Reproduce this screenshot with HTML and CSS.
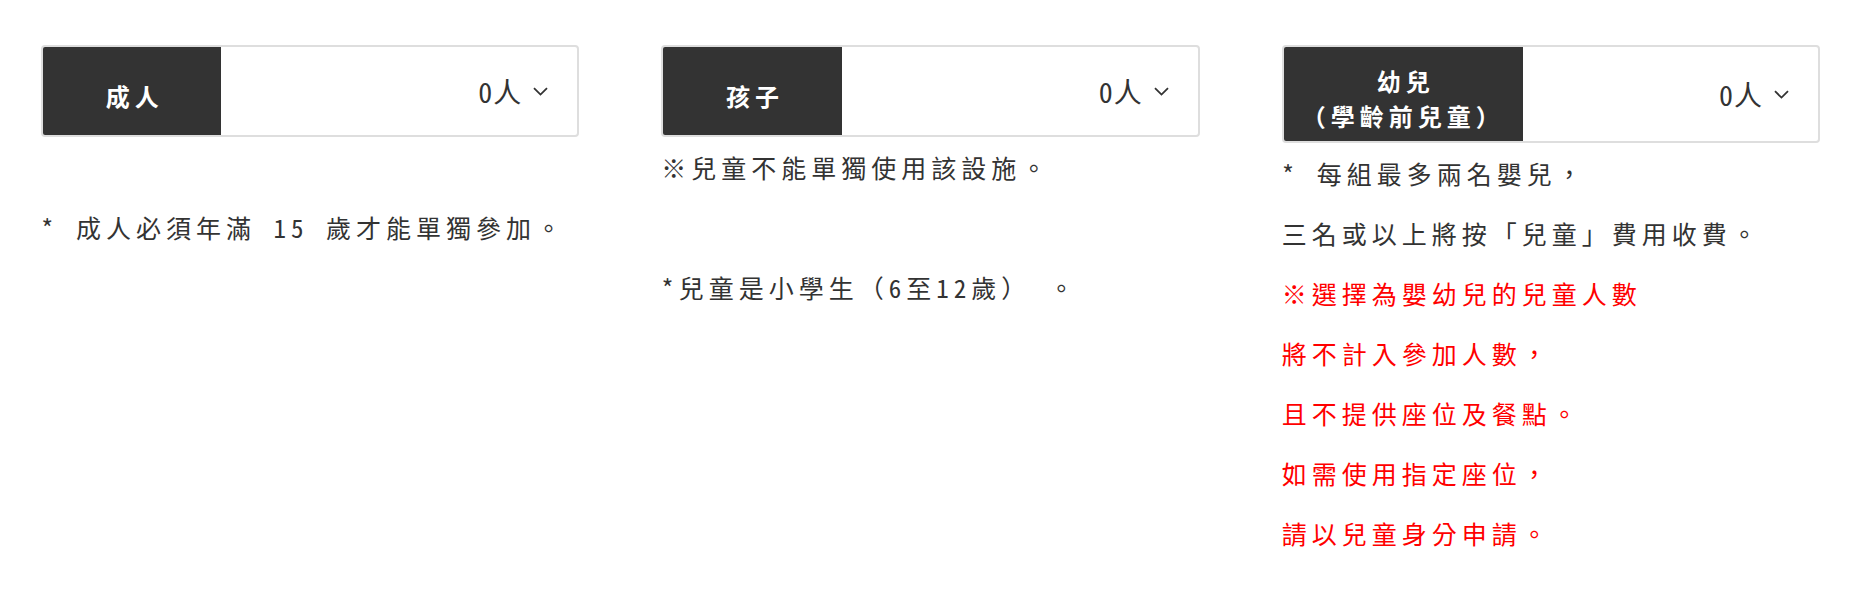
FILE: index.html
```html
<!DOCTYPE html>
<html lang="zh-Hant">
<head>
    <meta charset="UTF-8">
    <meta name="viewport" content="width=device-width, initial-scale=1.0">
    <title>人數選擇</title>
    <link rel="stylesheet" href="styles.css">
</head>
<body>
    <div class="guests">
        <!-- 成人 -->
        <div class="guest-col">
            <div class="counter">
                <div class="counter-label">成人</div>
                <div class="counter-value">
                    <span class="num">0人</span>
                    <svg class="chevron" width="15" height="9" viewBox="0 0 15 9"><polyline points="1,1.2 7.5,7.6 14,1.2" fill="none" stroke="#333" stroke-width="1.8"/></svg>
                </div>
            </div>
            <p class="note">&nbsp;</p>
            <p class="note">* 成人必須年滿 15 歲才能單獨參加。</p>
        </div>

        <!-- 孩子 -->
        <div class="guest-col">
            <div class="counter">
                <div class="counter-label">孩子</div>
                <div class="counter-value">
                    <span class="num">0人</span>
                    <svg class="chevron" width="15" height="9" viewBox="0 0 15 9"><polyline points="1,1.2 7.5,7.6 14,1.2" fill="none" stroke="#333" stroke-width="1.8"/></svg>
                </div>
            </div>
            <p class="note">※兒童不能單獨使用該設施。</p>
            <p class="note">&nbsp;</p>
            <p class="note">*兒童是小學生（6至12歲） 。</p>
        </div>

        <!-- 幼兒 -->
        <div class="guest-col">
            <div class="counter">
                <div class="counter-label">幼兒<br>（學齡前兒童）</div>
                <div class="counter-value">
                    <span class="num">0人</span>
                    <svg class="chevron" width="15" height="9" viewBox="0 0 15 9"><polyline points="1,1.2 7.5,7.6 14,1.2" fill="none" stroke="#333" stroke-width="1.8"/></svg>
                </div>
            </div>
            <p class="note">* 每組最多兩名嬰兒，<br>三名或以上將按「兒童」費用收費。</p>
            <p class="note red">※選擇為嬰幼兒的兒童人數<br>將不計入參加人數，<br>且不提供座位及餐點。<br>如需使用指定座位，<br>請以兒童身分申請。</p>
        </div>
    </div>
</body>
</html>
```

FILE: styles.css
```css
body {
    margin: 0;
    padding: 45px 41px;
    background: #fff;
    color: #333;
    font-family: "Noto Sans Mono CJK JP", "Noto Sans CJK JP", sans-serif;
}

.guests {
    display: grid;
    grid-template-columns: repeat(3, minmax(0, 1fr));
    column-gap: 82px;
    align-items: start;
}

/* 人數選擇框 */
.counter {
    display: flex;
    border: 2px solid #dedede;
    border-radius: 4px;
    overflow: hidden;
}

.counter-label {
    flex: 0 0 auto;
    min-width: 33.4%;
    min-height: 88px;
    box-sizing: border-box;
    padding: 16px 30px 8px;
    display: flex;
    align-items: center;
    justify-content: center;
    text-align: center;
    background: #333;
    color: #fff;
    font-family: "Noto Sans CJK JP", sans-serif;
    font-feature-settings: "halt";
    font-weight: bold;
    font-size: 24px;
    line-height: 35px;
    letter-spacing: 5px;
    text-indent: 5px;
}

.counter-value {
    flex: 1;
    display: flex;
    align-items: center;
    justify-content: flex-end;
    gap: 11px;
    padding-right: 29px;
    font-size: 28px;
    font-weight: 500;
    letter-spacing: 1px;
}

.chevron {
    display: block;
}

/* 說明文字 */
.note {
    margin: 0;
    font-size: 25px;
    font-weight: 500;
    line-height: 60px;
    letter-spacing: 5px;
    white-space: nowrap;
}

.note.red {
    color: #f00;
}
```
